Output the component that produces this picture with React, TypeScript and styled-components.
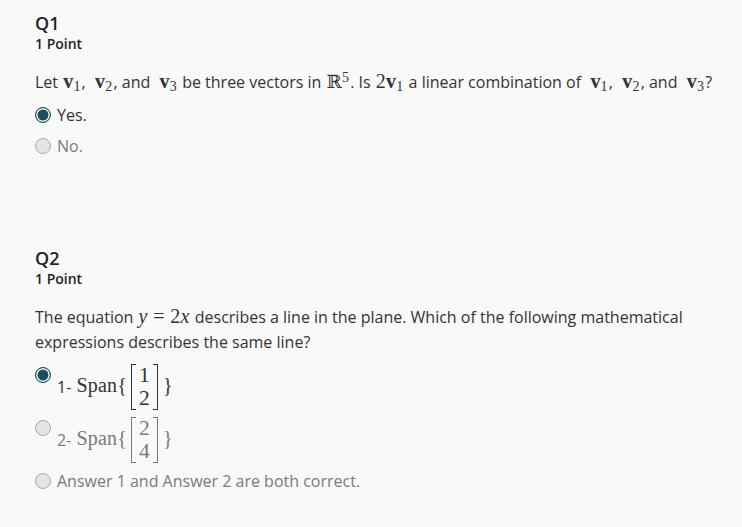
import React from 'react';
import styled, { createGlobalStyle } from 'styled-components';

const GlobalStyle = createGlobalStyle`
  body {
    margin: 0;
    background: #f9f9f9;
    font-family: "Open Sans", "Noto Sans", sans-serif;
    color: #333;
  }
`;

const Page = styled.div`
  padding: 12px 20px 0 35px;
`;

const Question = styled.section`
  & + & {
    margin-top: 90px;
  }
`;

const Title = styled.h2`
  margin: 0;
  font-size: 18px;
  font-weight: 600;
  line-height: 22px;
  color: #1f1f1f;
`;

const Points = styled.div`
  font-size: 14px;
  font-weight: 600;
  line-height: 19px;
  color: #1f1f1f;
`;

const Prompt = styled.p`
  margin: 17px 0 9px;
  font-size: 16px;
  line-height: 25px;
  color: #333;
`;

const Options = styled.div<{ $gap?: number }>`
  display: flex;
  flex-direction: column;
  gap: ${p => p.$gap ?? 9}px;
`;

const Option = styled.label<{ $checked?: boolean }>`
  display: flex;
  align-items: flex-start;
  gap: 6px;
  font-size: 16px;
  line-height: 22px;
  color: ${p => (p.$checked ? '#333' : '#7a7a7a')};
  cursor: pointer;
`;

const Radio = styled.span<{ $checked?: boolean }>`
  flex: none;
  box-sizing: border-box;
  width: 16px;
  height: 16px;
  margin-top: 3px;
  border-radius: 50%;
  border: 1.5px solid ${p => (p.$checked ? '#1d4e5b' : '#a9a9a9')};
  background: ${p => (p.$checked ? '#1d4e5b' : '#e4e4e4')};
  box-shadow: ${p => (p.$checked ? 'inset 0 0 0 1.5px #fff' : 'none')};
`;

const OptionBody = styled.span`
  display: inline-flex;
  align-items: center;
`;

const M = styled.span`
  font-family: "Liberation Serif", "DejaVu Serif", serif;
  font-size: 1.25em;
  letter-spacing: 0.01em;
  white-space: nowrap;
  line-height: 1;
  margin: 0 1px;
`;

const Bold = styled.span`
  font-weight: 700;
`;

const Ital = styled.span`
  font-style: italic;
`;

const Rel = styled.span`
  margin: 0 0.28em;
`;

const Sub = styled.sub`
  font-size: 0.7em;
  vertical-align: -0.22em;
  line-height: 0;
`;

const Sup = styled.sup`
  font-size: 0.7em;
  vertical-align: 0.45em;
  line-height: 0;
`;

const Reals = styled.span`
  font-family: "DejaVu Serif", serif;
  font-size: 0.92em;
`;

const Matrix = styled.span`
  display: inline-flex;
  align-items: stretch;
  margin: 0 5px 0 4px;
  vertical-align: middle;
`;

const Bracket = styled.span<{ $side: 'left' | 'right' }>`
  width: 4px;
  border: 1px solid currentColor;
  ${p => (p.$side === 'left' ? 'border-right: none;' : 'border-left: none;')}
`;

const Column = styled.span`
  display: flex;
  flex-direction: column;
  align-items: center;
  padding: 0 3px;
  font-size: 1.08em;
  line-height: 23px;
`;

const Vec = ({ n }: { n: number }) => (
  <M>
    <Bold>v</Bold>
    <Sub>{n}</Sub>
  </M>
);

const Span = ({ a, b }: { a: number; b: number }) => (
  <M>
    Span{'{'}
    <Matrix>
      <Bracket $side="left" />
      <Column>
        <span>{a}</span>
        <span>{b}</span>
      </Column>
      <Bracket $side="right" />
    </Matrix>
    {'}'}
  </M>
);

export default function App() {
  return (
    <>
      <GlobalStyle />
      <Page>
        <Question>
          <Title>Q1</Title>
          <Points>1 Point</Points>
          <Prompt>
            Let <Vec n={1} />,&nbsp; <Vec n={2} />, and&nbsp; <Vec n={3} /> be three vectors in{' '}
            <M>
              <Reals>ℝ</Reals>
              <Sup>5</Sup>
            </M>
            . Is{' '}
            <M>
              2<Bold>v</Bold>
              <Sub>1</Sub>
            </M>{' '}
            a linear combination of&nbsp; <Vec n={1} />,&nbsp; <Vec n={2} />, and&nbsp; <Vec n={3} />?
          </Prompt>
          <Options>
            <Option $checked>
              <Radio $checked />
              <OptionBody>Yes.</OptionBody>
            </Option>
            <Option>
              <Radio />
              <OptionBody>No.</OptionBody>
            </Option>
          </Options>
        </Question>

        <Question>
          <Title>Q2</Title>
          <Points>1 Point</Points>
          <Prompt>
            The equation{' '}
            <M>
              <Ital>y</Ital>
              <Rel>=</Rel>2<Ital>x</Ital>
            </M>{' '}
            describes a line in the plane. Which of the following mathematical expressions describes the
            same line?
          </Prompt>
          <Options $gap={7}>
            <Option $checked>
              <Radio $checked />
              <OptionBody>
                1-&nbsp;<Span a={1} b={2} />
              </OptionBody>
            </Option>
            <Option>
              <Radio />
              <OptionBody>
                2-&nbsp;<Span a={2} b={4} />
              </OptionBody>
            </Option>
            <Option>
              <Radio />
              <OptionBody>Answer 1 and Answer 2 are both correct.</OptionBody>
            </Option>
          </Options>
        </Question>
      </Page>
    </>
  );
}
